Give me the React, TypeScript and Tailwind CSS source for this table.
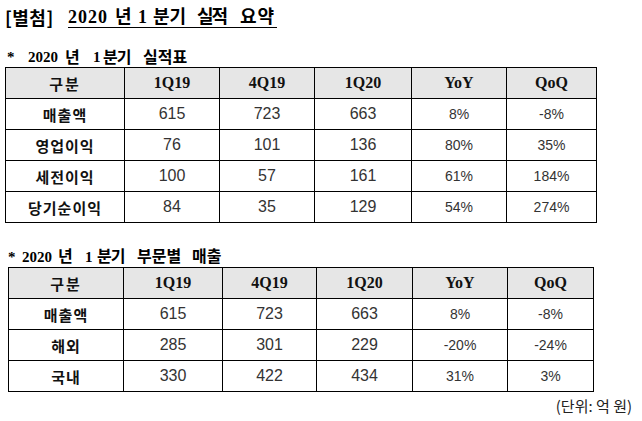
import React from "react";

const serif = "font-['Liberation_Serif','Noto_Sans_CJK_KR',serif]";
const kr = "font-['Noto_Sans_CJK_KR',sans-serif]";
const num = "font-['Liberation_Sans',sans-serif]";

type Row = { label: string; vals: string[] };

const t1: Row[] = [
  { label: "매출액", vals: ["615", "723", "663", "8%", "-8%"] },
  { label: "영업이익", vals: ["76", "101", "136", "80%", "35%"] },
  { label: "세전이익", vals: ["100", "57", "161", "61%", "184%"] },
  { label: "당기순이익", vals: ["84", "35", "129", "54%", "274%"] },
];

const t2: Row[] = [
  { label: "매출액", vals: ["615", "723", "663", "8%", "-8%"] },
  { label: "해외", vals: ["285", "301", "229", "-20%", "-24%"] },
  { label: "국내", vals: ["330", "422", "434", "31%", "3%"] },
];

const heads = ["1Q19", "4Q19", "1Q20", "YoY", "QoQ"];

function DataTable({ rows, widths, ml }: { rows: Row[]; widths: number[]; ml: string }) {
  return (
    <table className={`border-collapse table-fixed ${ml}`} style={{ width: widths.reduce((a, b) => a + b, 0) }}>
      <colgroup>
        {widths.map((w, i) => (
          <col key={i} style={{ width: w }} />
        ))}
      </colgroup>
      <tbody>
        <tr className="h-[31px] bg-[#e6e6e6]">
          <td className={`border border-black text-center p-0 text-[15px] font-bold text-[#111] ${kr} leading-none tracking-[2px]`}>
            구분
          </td>
          {heads.map((h) => (
            <td key={h} className={`border border-black text-center p-0 text-[16px] font-bold text-[#111] ${serif} leading-none`}>
              {h}
            </td>
          ))}
        </tr>
        {rows.map((r) => (
          <tr key={r.label} className="h-[31px] bg-white">
            <td className={`border border-black text-center p-0 text-[15px] font-bold text-[#111] ${kr} leading-none tracking-[1px]`}>
              {r.label}
            </td>
            {r.vals.map((v, i) => (
              <td
                key={i}
                className={`border border-black text-center p-0 ${i < 3 ? "text-[16px]" : "text-[14px]"} text-[#333] ${num} leading-none`}
              >
                {v}
              </td>
            ))}
          </tr>
        ))}
      </tbody>
    </table>
  );
}

function Seg({ w, children, cls = "" }: { w: string; children: React.ReactNode; cls?: string }) {
  return <span className={`inline-block shrink-0 ${w} ${cls}`}>{children}</span>;
}

export default function App() {
  return (
    <div className="w-[642px] h-[421px] bg-white overflow-hidden flex flex-col text-black">
      <div className="h-[24px] mt-[5px] ml-[5px] flex items-center text-[18px] leading-none">
        <span className={`${kr} font-semibold w-[63px] shrink-0 tracking-[0.5px]`}>[별첨]</span>
        <span className={`${serif} font-bold flex items-center border-b border-black pb-[1px] mt-[2px]`}>
          <Seg w="w-[47px]" cls="tracking-[1px]">2020</Seg>
          <Seg w="w-[23px]">년</Seg>
          <Seg w="w-[15px]">1</Seg>
          <Seg w="w-[44px]" cls="tracking-[0px]">분기</Seg>
          <Seg w="w-[43px]" cls="tracking-[-2px]">실적</Seg>
          <Seg w="w-[37px]" cls="tracking-[1px]">요약</Seg>
        </span>
      </div>
      <div className="h-[19px] mt-[19px] ml-[7px] flex items-center text-[15px] leading-none font-bold">
        <Seg w="w-[21px]" cls={serif}>*</Seg>
        <Seg w="w-[37px]" cls={serif}>2020</Seg>
        <Seg w="w-[28px]" cls={`${serif} text-[16px]`}>년</Seg>
        <Seg w="w-[10px]" cls={serif}>1</Seg>
        <Seg w="w-[40px]" cls={`${serif} text-[16px] tracking-[-1px]`}>분기</Seg>
        <Seg w="w-[52px]" cls={`${serif} text-[16px]`}>실적표</Seg>
      </div>
      <DataTable rows={t1} widths={[119, 95, 95, 97, 95, 90]} ml="ml-[5px]" />
      <div className="h-[20px] mt-[24px] ml-[8px] flex items-center text-[15px] leading-none font-bold">
        <Seg w="w-[14px]" cls={serif}>*</Seg>
        <Seg w="w-[36px]" cls={serif}>2020</Seg>
        <Seg w="w-[27px]" cls={`${serif} text-[16px]`}>년</Seg>
        <Seg w="w-[12px]" cls={serif}>1</Seg>
        <Seg w="w-[40px]" cls={`${serif} text-[16px] tracking-[-1px]`}>분기</Seg>
        <Seg w="w-[55px]" cls={`${serif} text-[16px]`}>부문별</Seg>
        <Seg w="w-[32px]" cls={`${serif} text-[16px]`}>매출</Seg>
      </div>
      <DataTable rows={t2} widths={[115, 99, 94, 96, 95, 86]} ml="ml-[8px]" />
      <div className={`mt-[6px] mr-[10px] self-end text-[15px] leading-none text-[#222] ${kr}`}>
        (단위: 억 원)
      </div>
    </div>
  );
}
